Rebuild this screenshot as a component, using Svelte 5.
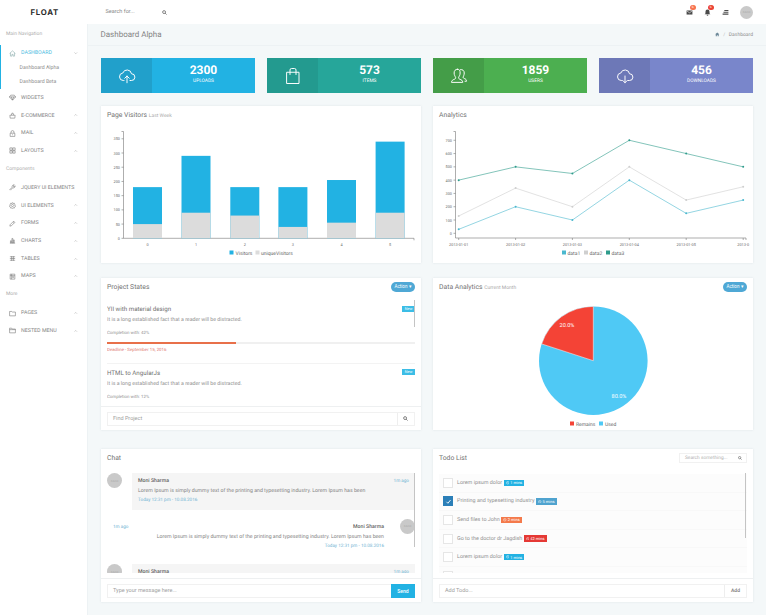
<script>
  const groups = [
    { label: 'Main Navigation', items: [
      { t: 'DASHBOARD', i: 'home', active: true, chev: 'down' },
      { t: 'WIDGETS', i: 'gem' },
      { t: 'E-COMMERCE', i: 'bag', chev: 'up' },
      { t: 'MAIL', i: 'lock', chev: 'up' },
      { t: 'LAYOUTS', i: 'grid', chev: 'up' } ] },
    { label: 'Components', items: [
      { t: 'JQUERY UI ELEMENTS', i: 'wrench' },
      { t: 'UI ELEMENTS', i: 'gear', chev: 'up' },
      { t: 'FORMS', i: 'pencil', chev: 'up' },
      { t: 'CHARTS', i: 'bars', chev: 'up' },
      { t: 'TABLES', i: 'table', chev: 'up' },
      { t: 'MAPS', i: 'map', chev: 'up' } ] },
    { label: 'More', items: [
      { t: 'PAGES', i: 'folder', chev: 'up' },
      { t: 'NESTED MENU', i: 'folder2', chev: 'up' } ] }
  ];
  const icons = {
    home: 'M2 12 12 3l10 9M5 10v11h5v-6h4v6h5V10',
    gem: 'M6 4h12l5 6-11 11L1 10zM1 10h22M8 10l4 11 4-11',
    bag: 'M3 11h18l-1 10H4zM8 11l2-7h4l2 7',
    lock: 'M4 11h16v11H4zM7 11V7a5 5 0 0 1 10 0v4M12 15v3',
    grid: 'M3 3h8v8H3zM13 3h8v8h-8zM3 13h8v8H3zM13 13h8v8h-8z',
    wrench: 'M21 6l-4 4-3-3 4-4a6 6 0 0 0-7 8L3 19l2 2 8-8a6 6 0 0 0 8-7z',
    gear: 'M12 2l2 3 4-1 1 4 3 2-2 3 2 3-3 2-1 3-4-1-2 2-2-2-4 1-1-3-3-2 2-3-2-3 3-2 1-4 4 1zM12 8a4 4 0 1 0 .01 0z',
    pencil: 'M3 21l1-5L16 4l4 4L8 20zM14 6l4 4',
    bars: 'M3 21h18M5 20v-7h3v7zM10 20V5h3v15zM15 20V10h3v10z',
    table: 'M3 6h18M3 12h18M3 18h18M9 4v16M15 4v16',
    map: 'M4 4h16v17H4zM4 9h16M9 4v17M14 12a2 2 0 1 0 .01 0z',
    folder: 'M2 5h8l2 2h10v13H2z',
    folder2: 'M2 4h7l2 3h11v13H2zM2 9h20'
  };
  const stats = [
    { n: '2300', l: 'UPLOADS', c: 'blue', i: 'up' },
    { n: '573', l: 'ITEMS', c: 'teal', i: 'bag' },
    { n: '1859', l: 'USERS', c: 'green', i: 'users' },
    { n: '456', l: 'DOWNLOADS', c: 'indigo', i: 'down' }
  ];
  const bars = [
    [133, 50, 180, '0'], [181.5, 90, 290, '1'], [230.3, 80, 180, '2'],
    [278.4, 40, 180, '3'], [327, 55, 205, '4'], [375.6, 90, 340, '5']
  ];
  const by = (v) => 238.3 - v * 0.2843;
  const yTicks = [0, 50, 100, 150, 200, 250, 300, 350];
  const lx = [458.7, 515.6, 572.4, 629.3, 686.2, 743.2];
  const ly = (v) => 233.3 - v * 0.1329;
  const series = [
    { c: '#4bb8cf', d: [30, 200, 100, 400, 150, 250] },
    { c: '#cfcfcf', d: [130, 340, 200, 500, 250, 350] },
    { c: '#2f9c8c', d: [400, 500, 450, 700, 600, 500] }
  ];
  const lTicks = [0, 100, 200, 300, 400, 500, 600, 700];
  const dates = ['2013-01-01', '2013-01-02', '2013-01-03', '2013-01-04', '2013-01-05', '2013-0'];
  const pts = (s) => s.d.map((v, i) => lx[i] + ',' + ly(v)).join(' ');
  const todos = [
    { t: 'Lorem ipsum dolor', b: '1 mins', c: 'b-cyan' },
    { t: 'Printing and typesetting industry', b: '5 mins', c: 'b-blue', done: true },
    { t: 'Send files to John', b: '2 mins', c: 'b-orange' },
    { t: 'Go to the doctor dr Jagdish', b: '42 mins', c: 'b-red' },
    { t: 'Lorem ipsum dolor', b: '1 mins', c: 'b-cyan' },
    { t: 'Printing and typesetting industry', b: '5 mins', c: 'b-blue' }
  ];
  const projects = [
    { t: 'YII with material design', p: 'Completion with: 42%', bar: true },
    { t: 'HTML to AngularJs', p: 'Completion with: 12%' }
  ];
</script>

{#snippet glass()}
  <svg class="glass" viewBox="0 0 24 24"><circle cx="10" cy="10" r="7" /><path d="M15 15l7 7" /></svg>
{/snippet}

{#snippet clock()}
  <svg class="clock" viewBox="0 0 24 24"><circle cx="12" cy="12" r="9" /><path d="M12 7v5l3 2" /></svg>
{/snippet}

<div class="page">
  <header class="top">
    <div class="brand">FLOAT</div>
    <div class="search"><span>Search for...</span>{@render glass()}</div>
    <div class="tools">
      <span class="tool">
        <svg viewBox="0 0 24 24"><path class="solid" d="M2 5h20v14H2z" /><path class="cut" d="M2 6l10 7 10-7" /></svg>
        <i class="dot orange">6</i>
      </span>
      <span class="tool">
        <svg viewBox="0 0 24 24"><path class="solid" d="M12 2a7 7 0 0 1 7 7v6l3 3H2l3-3V9a7 7 0 0 1 7-7zM9 20h6a3 3 0 0 1-6 0z" /></svg>
        <i class="dot red">6</i>
      </span>
      <span class="tool">
        <svg viewBox="0 0 24 24"><path class="solid" d="M8 3h14v4H8zM5 9h17v4H5zM2 15h20v5H2z" /></svg>
      </span>
      <span class="avatar small">64x64</span>
    </div>
  </header>

  <div class="body">
    <nav class="side">
      {#each groups as g}
        <div class="label">{g.label}</div>
        {#each g.items as it}
          <div class="row" class:on={it.active}>
            <svg class="ni" viewBox="0 0 24 24"><path d={icons[it.i]} /></svg>
            <span>{it.t}</span>
            {#if it.chev}
              <svg class="chev" viewBox="0 0 10 6"><path d={it.chev === 'up' ? 'M1 5l4-4 4 4' : 'M1 1l4 4 4-4'} /></svg>
            {/if}
          </div>
          {#if it.active}
            <div class="sub">Dashboard Alpha</div>
            <div class="sub">Dashboard Beta</div>
          {/if}
        {/each}
      {/each}
    </nav>

    <main class="main">
      <div class="titlebar">
        <h1>Dashboard Alpha</h1>
        <div class="crumb">
          <svg viewBox="0 0 24 24"><path d="M12 2 1 12h3v10h6v-6h4v6h6V12h3z" /></svg>
          <span class="sep">/</span><span>Dashboard</span>
        </div>
      </div>

      <div class="content">
        <section class="stats">
          {#each stats as s}
            <div class="stat {s.c}">
              <div class="ico">
                <svg viewBox="0 0 24 24">
                  {#if s.i === 'up'}
                    <path d="M8 18H7a5 5 0 0 1-.6-9.96A6 6 0 0 1 18 9a4.5 4.5 0 0 1 0 9h-2M12 21v-9M9 15l3-3 3 3" />
                  {:else if s.i === 'down'}
                    <path d="M8 18H7a5 5 0 0 1-.6-9.96A6 6 0 0 1 18 9a4.5 4.5 0 0 1 0 9h-2M12 12v9M9 18l3 3 3-3" />
                  {:else if s.i === 'bag'}
                    <path d="M4 7h16v15H4zM8 10V4a2 2 0 0 1 2-2h4a2 2 0 0 1 2 2v6" />
                  {:else}
                    <path d="M10 3c-3 0-4.500 2-4.500 5s1.500 4.500 2 6c.3 1-.5 2-2 2.500S2 18 2 20.500h15c0-2.500-2-3.500-3.500-4s-2.300-1.500-2-2.500c.5-1.500 2-3 2-6S13 3 10 3zM14 3.500c2.500-.5 5 1 5 4.500 0 2.500-1 4-1.500 5.500 0 1 .5 1.500 2 2s2.500 1.500 2.500 3.500h-2" />
                  {/if}
                </svg>
              </div>
              <div class="nums"><b>{s.n}</b><small>{s.l}</small></div>
            </div>
          {/each}
        </section>

        <section class="grid">
          <article class="card r1">
            <header class="ch"><h2>Page Visitors <em>Last Week</em></h2></header>
            <svg class="chart" viewBox="101 106 320 157">
              <g class="axis">
                <path d="M121.500 131.500h2V238.300H414v2" />
                {#each yTicks as v}
                  <path d="M121.500 {by(v)}h2" />
                  <text class="tk" x="120" y={by(v) + 1.600} text-anchor="end">{v}</text>
                {/each}
              </g>
              {#each bars as b}
                <rect x={b[0]} y={by(b[2])} width="29" height={238.3 - by(b[2])} fill="#22b2e3" />
                <rect x={b[0]} y={by(b[1])} width="29" height={238.3 - by(b[1])} fill="#dcdcdc" />
                <text class="tk" x={b[0] + 14.5} y="245.500" text-anchor="middle">{b[3]}</text>
              {/each}
              <rect x="229.500" y="250.500" width="4" height="4" fill="#22b2e3" />
              <text class="lg" x="235.500" y="254.500">Visitors</text>
              <rect x="255.500" y="250.500" width="4" height="4" fill="#dcdcdc" />
              <text class="lg" x="261" y="254.500">uniqueVisitors</text>
            </svg>
          </article>

          <article class="card r1">
            <header class="ch"><h2>Analytics</h2></header>
            <svg class="chart" viewBox="433 106 320 157">
              <g class="axis">
                <path d="M453.500 131.500h2V238H746v2" />
                {#each lTicks as v}
                  <path d="M453.500 {ly(v)}h2" />
                  <text class="tk" x="452" y={ly(v) + 1.600} text-anchor="end">{v}</text>
                {/each}
                {#each lx as x}
                  <path d="M{x} 238v2" />
                {/each}
              </g>
              {#each dates as d, i}
                <text class="tk" x={lx[i]} y="245.500" text-anchor="middle">{d}</text>
              {/each}
              {#each series as s}
                <polyline points={pts(s)} stroke={s.c} class="ln" />
                {#each s.d as v, i}
                  <circle cx={lx[i]} cy={ly(v)} r="1" fill={s.c} />
                {/each}
              {/each}
              <rect x="562" y="250.500" width="4" height="4" fill="#4bb8cf" />
              <text class="lg" x="567.500" y="254.500">data1</text>
              <rect x="584" y="250.500" width="4" height="4" fill="#cfcfcf" />
              <text class="lg" x="589.500" y="254.500">data2</text>
              <rect x="606" y="250.500" width="4" height="4" fill="#2f9c8c" />
              <text class="lg" x="611.500" y="254.500">data3</text>
            </svg>
          </article>

          <article class="card r2">
            <header class="ch"><h2>Project States</h2><button class="pill">Action ▾</button></header>
            <div class="projects">
              {#each projects as p}
                <div class="proj">
                  <span class="new">New</span>
                  <h3>{p.t}</h3>
                  <p>It is a long established fact that a reader will be distracted.</p>
                  <small>{p.p}</small>
                  {#if p.bar}
                    <div class="track"><div class="fill"></div></div>
                    <div class="dead">Deadline - September 15, 2016</div>
                  {/if}
                </div>
              {/each}
              <div class="sb sb-proj"></div>
            </div>
            <footer class="cf">
              <div class="inp"><span>Find Project</span><div class="addon">{@render glass()}</div></div>
            </footer>
          </article>

          <article class="card r2">
            <header class="ch"><h2>Data Analytics <em>Current Month</em></h2><button class="pill">Action ▾</button></header>
            <svg class="chart" viewBox="433 278 320 152">
              <circle cx="593.300" cy="360.700" r="54.300" fill="#4fc9f5" />
              <path d="M593.300 360.700V306.400A54.300 54.300 0 0 0 541.660 343.920Z" fill="#f44336" stroke="#fff" stroke-width=".5" />
              <text class="pct" x="567" y="327">20.0%</text>
              <text class="pct" x="619" y="398">80.0%</text>
              <rect x="570" y="421.500" width="4" height="4" fill="#f44336" />
              <text class="lg" x="576" y="425.500">Remains</text>
              <rect x="599" y="421.500" width="4" height="4" fill="#4fc9f5" />
              <text class="lg" x="605" y="425.500">Used</text>
            </svg>
          </article>

          <article class="card r3">
            <header class="ch"><h2>Chat</h2></header>
            <div class="msgs">
              <div class="msg">
                <span class="avatar">64x64</span>
                <div class="bubble">
                  <div class="who"><b>Moni Sharma</b><span class="ago">1m ago</span></div>
                  <p>Lorem Ipsum is simply dummy text of the printing and typesetting industry. Lorem Ipsum has been</p>
                  <span class="when">Today 12:31 pm - 10.08.2016</span>
                </div>
              </div>
              <div class="msg right">
                <div class="bubble plain">
                  <div class="who"><span class="ago">1m ago</span><b>Moni Sharma</b></div>
                  <p>Lorem Ipsum is simply dummy text of the printing and typesetting industry. Lorem Ipsum has been</p>
                  <span class="when">Today 12:31 pm - 10.08.2016</span>
                </div>
                <span class="avatar">64x64</span>
              </div>
              <div class="msg">
                <span class="avatar">64x64</span>
                <div class="bubble">
                  <div class="who"><b>Moni Sharma</b><span class="ago">1m ago</span></div>
                </div>
              </div>
              <div class="sb sb-chat"></div>
            </div>
            <footer class="cf">
              <div class="inp"><span>Type your message here...</span><button class="send">Send</button></div>
            </footer>
          </article>

          <article class="card r3">
            <header class="ch">
              <h2>Todo List</h2>
              <div class="mini"><span>Search something...</span>{@render glass()}</div>
            </header>
            <div class="todos">
              {#each todos as t}
                <div class="todo">
                  <span class="box" class:done={t.done}>
                    {#if t.done}<svg viewBox="0 0 24 24"><path d="M5 13l5 5 9-11" /></svg>{/if}
                  </span>
                  <span class="tt">{t.t}</span>
                  <span class="tag {t.c}">{@render clock()}{t.b}</span>
                </div>
              {/each}
              <div class="sb sb-todo"></div>
            </div>
            <footer class="cf">
              <div class="inp"><span>Add Todo...</span><div class="addon add">Add</div></div>
            </footer>
          </article>
        </section>
      </div>
    </main>
  </div>
</div>

<style>
  :global(body) { margin: 0; background: #f4f8f9; overflow: hidden; }
  .page { width: 766px; height: 615px; overflow: hidden; font-family: Roboto, "Liberation Sans", sans-serif; color: #777; display: flex; flex-direction: column; text-rendering: geometricPrecision; }
  .top { height: 24px; flex: none; background: #fff; display: flex; align-items: center; box-sizing: border-box; }
  .brand { width: 101px; box-sizing: border-box; padding-left: 30.5px; font: 700 7.8px Inter, "Liberation Sans", sans-serif; letter-spacing: .75px; color: #2b2b2b; }
  .search { width: 71px; height: 14px; box-sizing: border-box; padding: 0 5px 0 4.500px; display: flex; align-items: center; justify-content: space-between; font-size: 5.500px; color: #888; }
  .glass { width: 5px; height: 5px; fill: none; stroke: #555; stroke-width: 3.4; flex: none; }
  .tools { margin-left: auto; padding-right: 13px; display: flex; align-items: center; }
  .tool { position: relative; width: 7px; height: 7px; margin-right: 11px; display: block; top: .5px; }
  .tool svg { display: block; width: 7px; height: 7px; }
  .solid { fill: #4b4b4b; }
  .cut { fill: none; stroke: #fff; stroke-width: 2; }
  .dot { position: absolute; left: 4px; top: -4.5px; width: 5.5px; height: 5.5px; border-radius: 50%; color: #fff; font: normal 3.5px/5.5px Roboto, sans-serif; text-align: center; }
  .orange { background: #f7734f; }
  .red { background: #ea4335; }
  .avatar { width: 15px; height: 15px; flex: none; border-radius: 50%; background: #c9c9c9; color: #aaa; font-size: 2.8px; display: flex; align-items: center; justify-content: center; }
  .avatar.small { width: 13px; height: 13px; }

  .body { flex: 1; display: flex; min-height: 0; }
  .side { width: 88px; flex: none; background: #fff; border-right: 1px solid #edf2f4; box-sizing: border-box; padding-top: 2.500px; font-size: 5.300px; color: #858585; }
  .label { height: 14.500px; line-height: 14.500px; padding-left: 6px; color: #b0b0b0; font-size: 5px; margin-bottom: 3.700px; }
  .label:not(:first-child) { margin-top: 1.800px; margin-bottom: 3px; }
  .row { height: 17.700px; display: flex; align-items: center; padding-left: 9px; position: relative; }
  .row.on { color: #4fbde2; border-left: 1px solid #22b2e3; padding-left: 8px; height: 17.500px; }
  .ni { width: 7px; height: 7px; fill: none; stroke: #777; stroke-width: 2; margin-right: 5px; flex: none; }
  .on .ni { stroke: #8aa; }
  .chev { position: absolute; right: 9.500px; width: 3.500px; height: 2.200px; fill: none; stroke: #999; stroke-width: 1.200; }
  .sub { height: 13.400px; line-height: 13.400px; padding-left: 18.500px; color: #909090; font-size: 5.200px; border-left: 1px solid #22b2e3; box-sizing: border-box; }

  .main { flex: 1; min-width: 0; display: flex; flex-direction: column; }
  .titlebar { height: 22px; flex: none; box-sizing: border-box; border-bottom: 1px solid #edf2f4; padding: 0 13px 0 12.500px; display: flex; align-items: center; justify-content: space-between; }
  h1 { margin: 0; font-size: 8px; font-weight: 400; color: #858585; }
  .crumb { display: flex; align-items: center; font-size: 5px; color: #8f8f8f; }
  .crumb svg { width: 4.500px; height: 4.500px; fill: #6e8a9a; }
  .sep { margin: 0 3.500px; color: #bbb; }
  .content { padding: 12px 13px; }
  .stats { display: grid; grid-template-columns: repeat(4, 154px); gap: 12px; }
  .stat { height: 35px; display: flex; color: #fff; }
  .blue { background: #22b2e3; } .blue .ico { background: #21a0cb; }
  .teal { background: #26a69a; } .teal .ico { background: #239a8f; }
  .green { background: #4caf50; } .green .ico { background: #449d48; }
  .indigo { background: #7986cb; } .indigo .ico { background: #6d78b7; }
  .ico { width: 51px; flex: none; display: flex; align-items: center; justify-content: center; }
  .ico svg { width: 18px; height: 18px; fill: none; stroke: #fff; stroke-width: 1.300; stroke-linejoin: round; stroke-linecap: round; }
  .nums { flex: 1; display: flex; flex-direction: column; align-items: center; justify-content: center; padding-bottom: 1px; }
  .nums b { font-size: 12px; line-height: 13.500px; font-weight: 700; }
  .nums small { font-size: 4.800px; line-height: 8px; }

  .grid { display: grid; grid-template-columns: 320px 320px; column-gap: 12px; grid-template-rows: 157px 167px 172px; margin-top: 13px; }
  .card { background: #fff; box-shadow: 0 0 2px rgba(120, 140, 150, .18); display: flex; flex-direction: column; position: relative; min-height: 0; overflow: hidden; }
  .r2 { margin-top: 15px; height: 152px; }
  .r3 { margin-top: 19px; height: 153px; }
  .ch { position: absolute; left: 0; right: 0; top: 0; height: 17px; padding: 0 6px; display: flex; align-items: center; justify-content: space-between; z-index: 1; }
  h2 { margin: 0; font-size: 6.800px; font-weight: 400; color: #727272; }
  em { font-style: normal; font-size: 5px; color: #aaa; }
  .pill { width: 24px; height: 10px; border: 0; border-radius: 5px; padding: 0; background: #4fa8d5; color: #fff; font: 4.500px Roboto, sans-serif; }
  .chart { display: block; width: 320px; height: 100%; flex: 1; }
  .axis path { fill: none; stroke: #777; stroke-width: .6; }
  .tk { font-size: 3.800px; fill: #666; stroke: none; }
  .lg { font-size: 5px; fill: #666; }
  .ln { fill: none; stroke-width: .6; }
  .pct { font-size: 5.500px; fill: #fff; text-anchor: middle; }

  .projects { position: absolute; left: 6px; right: 6px; top: 22px; height: 107px; overflow: hidden; }
  .proj { position: relative; height: 63.500px; box-sizing: border-box; padding-top: 5px; border-bottom: 1px solid #f3f3f3; }
  .proj:last-of-type { border: 0; }
  h3 { margin: 0; font-size: 6.200px; line-height: 9px; font-weight: 400; color: #727272; }
  .proj p { margin: 2px 0 0; font-size: 5.230px; line-height: 8px; color: #929292; }
  .proj small { display: block; font-size: 4.400px; line-height: 7px; margin-top: 6px; color: #909090; }
  .new { position: absolute; right: 0; top: 5.500px; width: 13px; height: 6px; background: #3cbde6; color: #fff; font-size: 3.800px; line-height: 6px; text-align: center; }
  .track { height: 2px; background: #f0f0f0; margin-top: 4.500px; }
  .fill { width: 129px; height: 100%; background: #e8704a; }
  .dead { font-size: 4.400px; line-height: 7px; margin-top: 3.500px; color: #dd7570; }
  .sb { position: absolute; right: 0; width: 1.500px; background: #c4c4c4; top: 0; }
  .sb-proj { height: 27px; }
  .sb-chat { height: 74px; }
  .sb-todo { height: 65px; right: 1px; }

  .cf { position: absolute; left: 0; right: 0; bottom: 0; padding: 5px 6px 4.500px; border-top: 1px solid #eef0f1; }
  .inp { height: 13.500px; display: flex; align-items: center; border: 1px solid #f1f1f1; box-sizing: border-box; font-size: 5.500px; color: #a0a0a0; padding-left: 5px; }
  .inp span { flex: 1; }
  .addon { width: 16.500px; height: 100%; border-left: 1px solid #eee; display: flex; align-items: center; justify-content: center; }
  .add { width: 21px; font-size: 5px; color: #777; font-weight: 500; }
  .send { width: 24px; height: 14px; border: 0; background: #22b2e3; color: #fff; font: 500 5px Roboto, sans-serif; padding: 0; margin-right: -1px; }

  .msgs { position: absolute; left: 6px; right: 6px; top: 24px; height: 100px; overflow: hidden; font-size: 5px; }
  .msg { display: flex; gap: 10px; height: 45.500px; }
  .bubble { flex: 1; height: 37px; background: #f5f5f5; box-sizing: border-box; padding: 5px 6px; }
  .who { display: flex; justify-content: space-between; line-height: 7px; }
  .who b { font-weight: 500; font-size: 5.200px; color: #666; }
  .ago { color: #6fb3d3; font-size: 4.600px; }
  .bubble p { margin: 3px 0 3.500px; font-size: 5.220px; line-height: 6.500px; color: #858585; white-space: nowrap; }
  .when { color: #6fb3d3; font-size: 4.600px; line-height: 6px; display: block; }
  .msg.right { gap: 16px; }
  .plain { background: #fff; text-align: right; padding: 5.500px 0 0 6px; }

  .mini { width: 68px; height: 10px; margin-top: 1px; border: 1px solid #f1f1f1; box-sizing: border-box; display: flex; align-items: center; justify-content: space-between; padding: 0 4px 0 5px; font-size: 4.800px; color: #b0b0b0; }
  .mini .glass { width: 4px; height: 4px; }
  .todos { position: absolute; left: 6px; right: 6px; top: 24px; height: 100px; overflow: hidden; padding-top: 1px; box-sizing: border-box; }
  .todo { height: 18.600px; display: flex; align-items: center; background: #fcfcfc; border-bottom: 1px solid #f8f8f8; box-sizing: border-box; padding-left: 4px; font-size: 5.400px; color: #929292; }
  .box { width: 10px; height: 10px; flex: none; box-sizing: border-box; border: 1px solid #e6e6e6; background: #fff; margin-right: 4px; display: flex; align-items: center; justify-content: center; }
  .box.done { background: #2b7fb8; border-color: #2b7fb8; }
  .box svg { width: 7px; height: 7px; fill: none; stroke: #fff; stroke-width: 3; }
  .tag { margin-left: 1.500px; height: 6.500px; display: inline-flex; align-items: center; padding: 0 2px; color: #fff; font-size: 4px; }
  .clock { width: 3.500px; height: 3.500px; fill: none; stroke: #fff; stroke-width: 3; margin-right: 1px; }
  .b-cyan { background: #22b2e3; } .b-blue { background: #4fa3cf; } .b-orange { background: #f47a4b; } .b-red { background: #e53935; }
</style>
